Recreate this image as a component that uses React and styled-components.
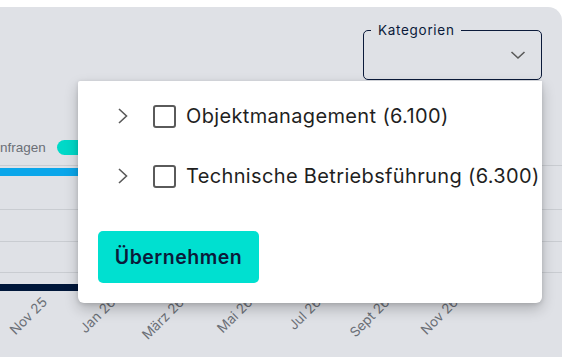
import React from "react";
import styled, { createGlobalStyle } from "styled-components";

const Global = createGlobalStyle`
  html, body { margin: 0; padding: 0; background: #ffffff; }
  body { font-family: "Inter", "Noto Sans", sans-serif; }
`;

const Page = styled.div`
  padding-top: 7px;
  width: 562px;
`;

const Panel = styled.div`
  position: relative;
  height: 350px;
  background: #dfe1e6;
  border-top-right-radius: 14px;
  overflow: hidden;
`;

const Header = styled.div`
  display: flex;
  justify-content: flex-end;
  padding: 16px 20px 0 0;
`;

const Select = styled.fieldset`
  box-sizing: border-box;
  margin: 0;
  width: 179px;
  height: 57px;
  padding: 0 15px 6px 0;
  border: 1.3px solid #0b1a3a;
  border-radius: 5px;
  display: flex;
  align-items: center;
  justify-content: flex-end;
`;

const SelectLabel = styled.legend`
  margin-left: 7px;
  padding: 0 6px 0 7px;
  font-size: 13.5px;
  line-height: 14px;
  color: #0b1a3a;
  letter-spacing: 0.7px;
`;

const Legend = styled.div`
  display: flex;
  align-items: center;
  gap: 11px;
  margin: 57px 0 0 0;
  height: 20px;
`;

const LegendText = styled.span`
  font-family: "Liberation Sans", Arial, sans-serif;
  font-size: 13.5px;
  color: #6b6f76;
`;

const Pill = styled.span`
  width: 34px;
  height: 15px;
  border-radius: 8px;
  background: #00d9c8;
`;

const Chart = styled.svg`
  display: block;
  width: 562px;
  height: 193px;
`;

const Menu = styled.div`
  position: absolute;
  left: 78px;
  top: 74px;
  width: 464px;
  height: 222px;
  box-sizing: border-box;
  background: #ffffff;
  border-radius: 2px 0 6px 6px;
  box-shadow: 0 6px 14px rgba(0, 0, 0, 0.22), 0 1px 4px rgba(0, 0, 0, 0.12);
  padding: 5px 0 0 0;
  display: flex;
  flex-direction: column;
`;

const Row = styled.div`
  display: flex;
  align-items: center;
  height: 60px;
  padding-left: 38px;
`;

const Chevron = styled.svg`
  width: 14px;
  height: 18px;
  margin-right: 23px;
`;

const Box = styled.span`
  box-sizing: border-box;
  width: 23px;
  height: 23px;
  border: 2px solid #5a5a5a;
  border-radius: 3px;
  margin-right: 10px;
`;

const Label = styled.span`
  font-size: 20px;
  color: #1f1f1f;
  white-space: nowrap;
  letter-spacing: 0.35px;
`;

const Button = styled.button`
  margin: 25px 0 0 20px;
  width: 161px;
  height: 52px;
  border: none;
  border-radius: 5px;
  background: #00e0d0;
  color: #0b1a3a;
  font-family: "Inter", "Noto Sans", sans-serif;
  font-size: 19.5px;
  font-weight: 600;
  letter-spacing: 0.5px;
`;

const months = ["Nov 25", "Jan 26", "März 26", "Mai 26", "Jul 26", "Sept 26", "Nov 26"];

const ChevronRight = () => (
  <Chevron viewBox="0 0 14 18">
    <path d="M3 2 L10.5 9 L3 16" fill="none" stroke="#5a5a5a" strokeWidth="1.6" />
  </Chevron>
);

export default function App() {
  return (
    <>
      <Global />
      <Page>
        <Panel>
          <Header>
            <Select>
              <SelectLabel>Kategorien</SelectLabel>
              <svg width="16" height="10" viewBox="0 0 16 10">
                <path d="M1.5 2 L8 8 L14.5 2" fill="none" stroke="#5a5a5a" strokeWidth="1.6" />
              </svg>
            </Select>
          </Header>
          <Legend>
            <LegendText>nfragen</LegendText>
            <Pill />
          </Legend>
          <Chart viewBox="0 0 562 193">
            <g stroke="#c9ccd1" strokeWidth="1">
              <line x1="0" x2="562" y1="8.5" y2="8.5" />
              <line x1="0" x2="562" y1="52.5" y2="52.5" />
              <line x1="0" x2="562" y1="84.5" y2="84.5" />
              <line x1="0" x2="562" y1="115.5" y2="115.5" />
            </g>
            <rect x="0" y="11" width="120" height="8" fill="#0aa6ea" />
            <rect x="0" y="127" width="120" height="7" fill="#00173a" />
            {months.map((m, i) => {
              const x = 48 + i * 68.5;
              return (
                <text
                  key={m}
                  x={x}
                  y={146}
                  transform={`rotate(-45 ${x} 146)`}
                  textAnchor="end"
                  fontSize="13.5"
                  fill="#6b6f76"
                  fontFamily="Inter, 'Noto Sans', sans-serif"
                >
                  {m}
                </text>
              );
            })}
          </Chart>
          <Menu>
            <Row>
              <ChevronRight />
              <Box />
              <Label>Objektmanagement (6.100)</Label>
            </Row>
            <Row>
              <ChevronRight />
              <Box />
              <Label>Technische Betriebsführung (6.300)</Label>
            </Row>
            <Button>Übernehmen</Button>
          </Menu>
        </Panel>
      </Page>
    </>
  );
}
